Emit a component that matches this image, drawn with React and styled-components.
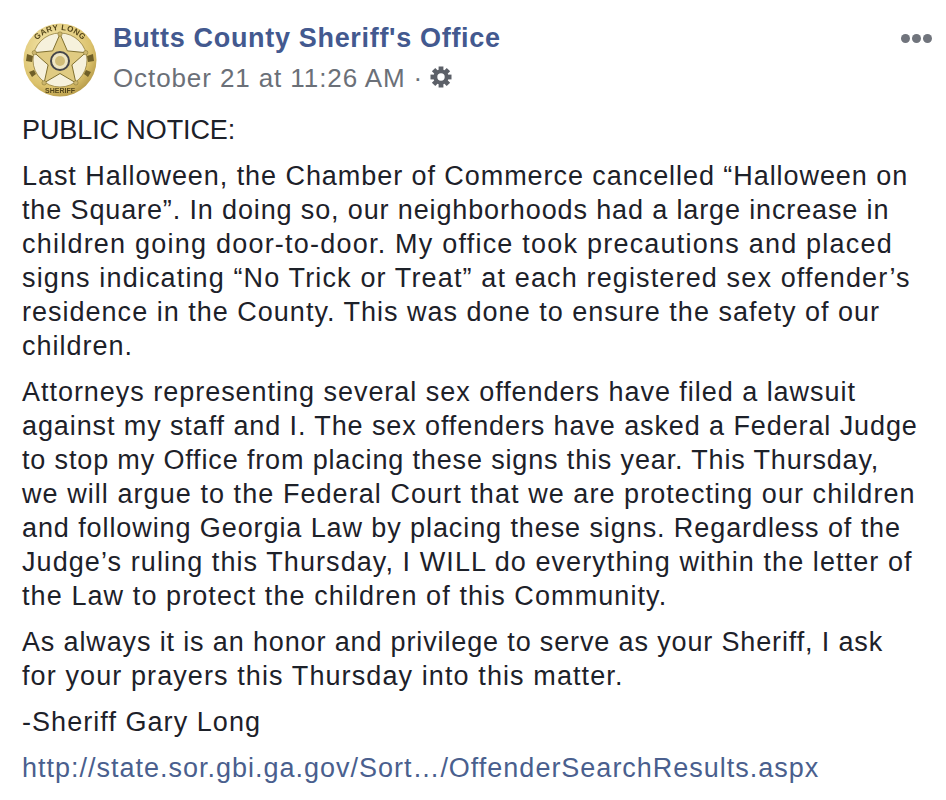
import styled, { createGlobalStyle } from "styled-components";

const Global = createGlobalStyle`
  html, body {
    margin: 0;
    background: #fff;
  }
`;

const Post = styled.div`
  width: 946px;
  height: 800px;
  box-sizing: border-box;
  padding: 18px 14px 0 22px;
  overflow: hidden;
  font-family: "Liberation Sans", Arial, sans-serif;
  color: #1d2129;
`;

const Header = styled.div`
  display: flex;
  align-items: flex-start;
  height: 95px;
`;

const Avatar = styled.svg`
  width: 76px;
  height: 76px;
  margin-top: 4px;
  flex: none;
  filter: blur(0.4px);
`;

const Meta = styled.div`
  margin-left: 15px;
  flex: 1;
`;

const Name = styled.div`
  color: #43598f;
  font-size: 27px;
  font-weight: 700;
  line-height: 40px;
  letter-spacing: 0.68px;
`;

const When = styled.div`
  display: flex;
  align-items: center;
  color: #6b7078;
  font-size: 26px;
  line-height: 40px;
  letter-spacing: 0.9px;
`;

const Dot = styled.span`
  margin: 0 7px 0 8px;
`;

const GearIcon = styled.svg`
  width: 24px;
  height: 24px;
  margin: -2px 0 0 -1px;
  filter: blur(0.3px);
`;

const Dots = styled.div`
  display: flex;
  gap: 2px;
  margin-top: 16px;
`;

const MoreDot = styled.span`
  width: 9px;
  height: 9px;
  border-radius: 50%;
  background: #70747c;
`;

const Para = styled.p`
  margin: 0 0 12px;
  font-size: 27px;
  line-height: 34px;
  white-space: nowrap;
`;

const Line = styled.span`
  display: block;
  letter-spacing: ${(p) => p.$ls}px;
`;

const Link = styled.a`
  color: #4a5f8e;
  text-decoration: none;
`;

// each line: text and its tracking
const paragraphs = [
  [["PUBLIC NOTICE:", -0.1]],
  [
    ["Last Halloween, the Chamber of Commerce cancelled “Halloween on", 0.94],
    ["the Square”. In doing so, our neighborhoods had a large increase in", 0.87],
    ["children going door-to-door. My office took precautions and placed", 1.22],
    ["signs indicating “No Trick or Treat” at each registered sex offender’s", 1.14],
    ["residence in the County. This was done to ensure the safety of our", 1.01],
    ["children.", 0.98],
  ],
  [
    ["Attorneys representing several sex offenders have filed a lawsuit", 0.97],
    ["against my staff and I. The sex offenders have asked a Federal Judge", 0.9],
    ["to stop my Office from placing these signs this year. This Thursday,", 0.85],
    ["we will argue to the Federal Court that we are protecting our children", 1.06],
    ["and following Georgia Law by placing these signs. Regardless of the", 0.91],
    ["Judge’s ruling this Thursday, I WILL do everything within the letter of", 1.08],
    ["the Law to protect the children of this Community.", 1.09],
  ],
  [
    ["As always it is an honor and privilege to serve as your Sheriff, I ask", 0.86],
    ["for your prayers this Thursday into this matter.", 1.1],
  ],
  [["-Sheriff Gary Long", 1.05]],
];

function Gear() {
  return (
    <GearIcon viewBox="0 0 24 24">
      <g fill="#5c6068">
        {[0, 45, 90, 135].map((a) => (
          <rect key={a} x="9.6" y="1.5" width="4.8" height="21" transform={`rotate(${a} 12 12)`} />
        ))}
        <circle cx="12" cy="12" r="7.6" />
      </g>
      <circle cx="12" cy="12" r="3.7" fill="#fff" />
    </GearIcon>
  );
}

function Badge() {
  const points = [];
  const tips = [];
  for (let i = 0; i < 10; i++) {
    const r = i % 2 ? 12.5 : 27;
    const a = (Math.PI / 5) * i - Math.PI / 2;
    points.push(`${38 + r * Math.cos(a)},${39 + r * Math.sin(a)}`);
    if (i % 2 === 0) tips.push([38 + r * Math.cos(a), 39 + r * Math.sin(a)]);
  }
  return (
    <Avatar viewBox="0 0 76 76">
      <defs>
        <radialGradient id="gold" cx="40%" cy="35%" r="75%">
          <stop offset="0%" stopColor="#f8edb8" />
          <stop offset="70%" stopColor="#dcc26c" />
          <stop offset="100%" stopColor="#a88c3c" />
        </radialGradient>
      </defs>
      <circle cx="38" cy="38" r="36.5" fill="url(#gold)" />
      <circle cx="38" cy="38" r="27" fill="#f6f1dc" stroke="#94803f" strokeWidth="0.8" />
      <polygon points={points.join(" ")} fill="#e0cb82" stroke="#80702f" strokeWidth="1" />
      {tips.map(([x, y]) => (
        <circle key={x} cx={x} cy={y} r="2.2" fill="#cbb56d" stroke="#80702f" strokeWidth="0.5" />
      ))}
      <path d="M5 32l6 2-1 6-6-1zM71 32l-6 2 1 6 6-1zM7 50l5-2 2 4-4 3zM69 50l-5-2-2 4 4 3z" fill="#6f5f28" />
      <circle cx="38" cy="39" r="9" fill="#efe6c2" stroke="#45464a" strokeWidth="2" />
      <circle cx="38" cy="39" r="5" fill="#d1bd78" />
      <path id="b-top" d="M8 38a30 30 0 0 1 60 0" fill="none" />
      <text fontSize="8" fontWeight="700" fill="#54461b" fontFamily="Liberation Sans" letterSpacing="0.4">
        <textPath href="#b-top" startOffset="50%" textAnchor="middle">GARY LONG</textPath>
      </text>
      <text x="38" y="71" fontSize="7" fontWeight="700" textAnchor="middle" fill="#54461b" fontFamily="Liberation Sans">SHERIFF</text>
    </Avatar>
  );
}

export default function App() {
  return (
    <>
      <Global />
      <Post>
        <Header>
          <Badge />
          <Meta>
            <Name>Butts County Sheriff's Office</Name>
            <When>
              October 21 at 11:26 AM<Dot>·</Dot>
              <Gear />
            </When>
          </Meta>
          <Dots>
            <MoreDot />
            <MoreDot />
            <MoreDot />
          </Dots>
        </Header>
        {paragraphs.map((lines, i) => (
          <Para key={i}>
            {lines.map(([text, ls]) => (
              <Line key={text} $ls={ls}>{text}</Line>
            ))}
          </Para>
        ))}
        <Para>
          <Line $ls={0.99}>
            <Link>http://state.sor.gbi.ga.gov/Sort…/OffenderSearchResults.aspx</Link>
          </Line>
        </Para>
      </Post>
    </>
  );
}
